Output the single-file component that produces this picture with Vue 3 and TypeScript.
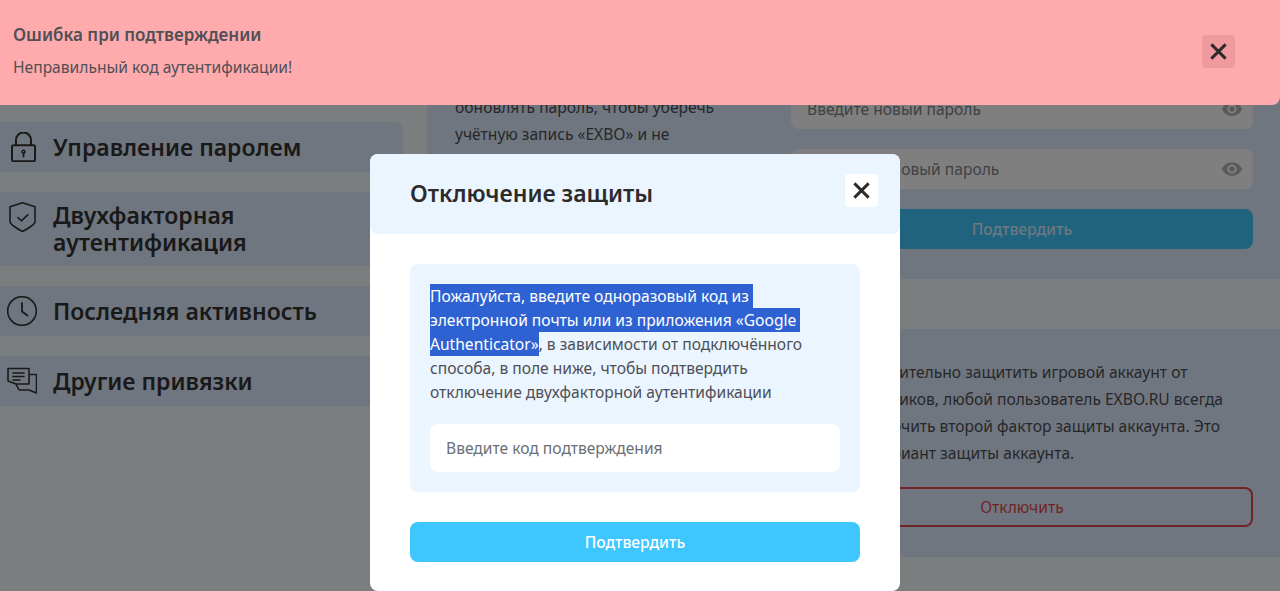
<script setup lang="ts">
import { onMounted, ref } from 'vue'

const selected = ref<HTMLElement | null>(null)

const menu = [
  { id: 'lock', label: 'Управление паролем' },
  { id: 'shield', label: 'Двухфакторная аутентификация' },
  { id: 'clock', label: 'Последняя активность' },
  { id: 'chat', label: 'Другие привязки' },
]

const eye =
  'M12 4.5C7 4.5 2.73 7.61 1 12c1.73 4.39 6 7.5 11 7.5s9.27-3.11 11-7.5c-1.73-4.39-6-7.5-11-7.5zM12 17c-2.76 0-5-2.24-5-5s2.24-5 5-5 5 2.24 5 5-2.24 5-5 5zm0-8c-1.66 0-3 1.34-3 3s1.34 3 3 3 3-1.34 3-3-1.34-3-3-3z'

onMounted(() => {
  // the user has dragged over the first sentence in the reference
  if (!selected.value) return
  const range = document.createRange()
  range.selectNodeContents(selected.value)
  const sel = window.getSelection()
  sel?.removeAllRanges()
  sel?.addRange(range)
})
</script>

<template>
  <div class="page">
    <aside class="sidebar">
      <div v-for="item in menu" :key="item.id" class="menu-row">
        <svg class="menu-icon" viewBox="0 0 30 30" fill="none" stroke="#333" stroke-width="1.6" stroke-linecap="round" stroke-linejoin="round">
          <template v-if="item.id === 'lock'">
            <rect x="5" y="13.2" width="23" height="16" rx="1.5" stroke-width="2" />
            <path d="M9 13V8a7.500 7.500 0 0 1 15 0v5" stroke-width="2" />
            <circle cx="16.500" cy="19.800" r="1.500" stroke-width="1.500" />
            <path d="M16.500 21.500v3" stroke-width="1.800" />
          </template>
          <template v-else-if="item.id === 'shield'">
            <path d="M15.500 .8 28 4.800v15c0 2.500-8 7.500-12.500 9.700C11 27.300 3 22.300 3 19.800v-15z" />
            <path d="m11 15.500 3.300 3.300 6.500-6" />
          </template>
          <template v-else-if="item.id === 'clock'">
            <circle cx="15" cy="15" r="14.300" />
            <path d="M15 7v8.500l5.500 4" stroke-width="1.800" />
          </template>
          <template v-else>
            <path d="M1 2h21v15.500H9L1 14.500z" transform="translate(0 .5)" />
            <path d="M6 7h11M6 10.500h11M6 14h7" />
            <path d="M23 8.500h6.500V27L22 24H12l-3-6" />
          </template>
        </svg>
        <div class="menu-label">{{ item.label }}</div>
      </div>
    </aside>

    <main class="content">
      <section class="top-section">
        <div class="hint-card">
          <p>
            Мы рекомендуем регулярно обновлять пароль, чтобы уберечь учётную запись «EXBO» и не
            потерять доступ к игре
          </p>
        </div>
        <div class="form-card">
          <div class="field">
            <input class="field-input" placeholder="Введите новый пароль" />
            <svg class="eye" viewBox="0 0 24 24"><path :d="eye" /></svg>
          </div>
          <div class="field">
            <input class="field-input" placeholder="Повторите новый пароль" />
            <svg class="eye" viewBox="0 0 24 24"><path :d="eye" /></svg>
          </div>
          <button class="btn-muted">Подтвердить</button>
        </div>
      </section>

      <section class="twofa-section">
        <div class="twofa-side"></div>
        <div class="twofa-body">
          <p>
            Чтобы дополнительно защитить игровой аккаунт от злоумышленников, любой пользователь
            EXBO.RU всегда может подключить второй фактор защиты аккаунта. Это надёжный
            вариант защиты аккаунта.
          </p>
          <button class="btn-danger">Отключить</button>
        </div>
      </section>
    </main>

    <div class="overlay">
      <div class="modal">
        <header class="modal-head">
          <h2 class="modal-title">Отключение защиты</h2>
          <button class="close-btn">
            <svg viewBox="0 0 16 16" class="close-icon"><path d="m2 2 12 12M14 2 2 14" /></svg>
          </button>
        </header>
        <div class="modal-body">
          <div class="info-box">
            <p class="info-text"><span ref="selected">Пожалуйста, введите одноразовый код из электронной почты или из приложения «Google Authenticator»</span>, в зависимости от подключённого способа, в поле ниже, чтобы подтвердить отключение двухфакторной аутентификации</p>
            <input class="code-input" placeholder="Введите код подтверждения" />
          </div>
          <button class="btn-primary">Подтвердить</button>
        </div>
      </div>
    </div>

    <div class="toast">
      <div class="toast-copy">
        <div class="toast-title">Ошибка при подтверждении</div>
        <div class="toast-text">Неправильный код аутентификации!</div>
      </div>
      <button class="close-btn toast-close">
        <svg viewBox="0 0 16 16" class="close-icon"><path d="m2 2 12 12M14 2 2 14" /></svg>
      </button>
    </div>
  </div>
</template>

<style>
html,
body {
  margin: 0;
  background: #f6fdff;
}
</style>

<style scoped>
.page {
  position: relative;
  display: flex;
  gap: 24px;
  height: 591px;
  overflow: hidden;
  background: #f6fdff;
  font-family: 'Noto Sans', sans-serif;
  color: #4f4f55;
}

.sidebar {
  width: 403px;
  flex: none;
  display: flex;
  flex-direction: column;
  gap: 20px;
  padding-top: 122px;
}

.menu-row {
  display: flex;
  gap: 16px;
  padding: 10px 0 10px 7px;
  background: #e0ecfe;
  border-radius: 0 8px 8px 0;
}

.menu-icon {
  width: 30px;
  height: 30px;
  flex: none;
}

.menu-label {
  display: flex;
  align-items: center;
  min-height: 30px;
  width: 300px;
  font-size: 23px;
  font-weight: 600;
  line-height: 27px;
  color: #333;
}

.content {
  flex: 1;
  display: flex;
  flex-direction: column;
  gap: 50px;
}

.top-section {
  display: flex;
  height: 279px;
  background: #e0ecfe;
}

.hint-card {
  width: 334px;
  flex: none;
  box-sizing: border-box;
  padding: 67px 28px 0;
  font-size: 15.6px;
  line-height: 27px;
}

.hint-card p,
.twofa-body p {
  margin: 0;
}

.form-card {
  flex: 1;
  display: flex;
  flex-direction: column;
  gap: 20px;
  padding: 89px 27px 0 30px;
}

.field {
  position: relative;
}

.field-input {
  display: block;
  box-sizing: border-box;
  width: 100%;
  height: 40px;
  padding: 0 16px;
  border: 0;
  border-radius: 8px;
  background: #fff;
  font: 15.6px 'Noto Sans', sans-serif;
}

.field-input::placeholder {
  color: #7f8388;
}

.eye {
  position: absolute;
  right: 10px;
  top: 9px;
  width: 22px;
  height: 22px;
  fill: #b5b5b5;
}

.btn-muted,
.btn-primary {
  display: block;
  height: 40px;
  border: 0;
  border-radius: 8px;
  background: #3ec6ff;
  font: 500 15.6px 'Noto Sans', sans-serif;
}

.btn-muted {
  color: #d9f0ff;
}

.twofa-section {
  display: flex;
  height: 228px;
  background: #e0ecfe;
}

.twofa-side {
  width: 334px;
  flex: none;
}

.twofa-body {
  flex: 1;
  padding: 30px 27px 0 30px;
  font-size: 15.6px;
  line-height: 27px;
}

.btn-danger {
  display: block;
  box-sizing: border-box;
  width: 100%;
  height: 40px;
  margin-top: 20px;
  border: 2px solid #e0484c;
  border-radius: 8px;
  background: transparent;
  color: #e0484c;
  font: 15.6px 'Noto Sans', sans-serif;
}

.overlay {
  position: absolute;
  inset: 0;
  display: flex;
  justify-content: center;
  padding: 154px 10px 0 0;
  background: rgba(0, 0, 0, 0.5);
}

.modal {
  width: 530px;
  height: 437px;
  background: #fff;
  border-radius: 8px;
}

.modal-head {
  display: flex;
  align-items: flex-start;
  justify-content: space-between;
  box-sizing: border-box;
  height: 80px;
  padding: 20px 22px 0 40px;
  background: #eaf5ff;
  border-radius: 8px;
}

.modal-title {
  margin: 0;
  font-size: 23px;
  font-weight: 600;
  line-height: 39px;
  color: #2d2a2a;
}

.close-btn {
  display: flex;
  align-items: center;
  justify-content: center;
  width: 33px;
  height: 33px;
  padding: 0;
  border: 0;
  border-radius: 4px;
  background: #fff;
}

.close-icon {
  width: 19px;
  height: 19px;
  fill: none;
  stroke: #2d2a2a;
  stroke-width: 2.4;
}

.modal-body {
  padding: 30px 40px 0;
}

.info-box {
  padding: 20px;
  height: 228px;
  box-sizing: border-box;
  background: #eaf5ff;
  border-radius: 8px;
}

.info-text {
  margin: 0 0 20px;
  font-size: 15.6px;
  line-height: 24px;
}

.info-text span::selection {
  background: #2e62d2;
  color: #fff;
}

.code-input {
  display: block;
  box-sizing: border-box;
  width: 100%;
  height: 48px;
  padding: 0 16px;
  border: 0;
  border-radius: 8px;
  background: #fff;
  font: 15.6px 'Noto Sans', sans-serif;
}

.code-input::placeholder {
  color: #6b7075;
}

.btn-primary {
  width: 100%;
  margin-top: 30px;
  color: #fff;
}

.toast {
  position: absolute;
  left: 0;
  right: 0;
  top: 0;
  display: flex;
  align-items: center;
  justify-content: space-between;
  box-sizing: border-box;
  height: 105px;
  padding: 0 45px 2px 13px;
  background: #ffabad;
  border-radius: 0 0 8px 0;
}

.toast-copy {
  margin-bottom: 4px;
}

.toast-title {
  font-size: 17px;
  font-weight: 600;
  line-height: 24px;
  color: #4f4f55;
}

.toast-text {
  margin-top: 10px;
  font-size: 15.6px;
  line-height: 20px;
}

.toast-close {
  background: #ee9a9e;
}
</style>
